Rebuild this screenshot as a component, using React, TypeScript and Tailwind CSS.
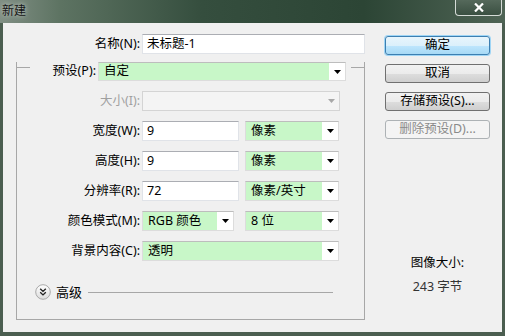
import React from 'react';

const Arrow = ({ disabled = false }: { disabled?: boolean }) => (
  <svg width="7" height="4" viewBox="0 0 7 4">
    <path d="M0 0h7L3.5 4z" fill={disabled ? '#a8a8a8' : '#000'} />
  </svg>
);

const TextInput = ({ value, w }: { value: string; w: string }) => (
  <div className={`${w} h-full bg-white border border-[#e0e3e8] border-t-[#abadb3] pl-[4px] flex items-center`}>
    {value}
  </div>
);

const GreenSelect = ({ value, w }: { value: string; w: string }) => (
  <div className={`${w} h-full flex border border-[#dcdcdc] border-t-[#bdbdbd] bg-white`}>
    <div className="flex-1 bg-[#c8f7c8] pl-[5px] flex items-center">{value}</div>
    <div className="w-[16px] flex items-center justify-center">
      <Arrow />
    </div>
  </div>
);

const Label = ({ text, disabled = false }: { text: string; disabled?: boolean }) => (
  <div className={`w-[125px] text-right pr-[2px] ${disabled ? 'text-[#a0a0a0]' : 'text-black'}`}>{text}</div>
);

const Btn = ({ text, kind }: { text: string; kind?: 'focus' | 'disabled' }) => {
  const cls =
    kind === 'focus'
      ? 'border-[#3c7fb1] bg-[linear-gradient(#e8f5fc_0%,#dbf0fb_50%,#bee6fd_51%,#a7d9f5_100%)] shadow-[0_0_0_1px_#9fd5f5] text-black'
      : kind === 'disabled'
      ? 'border-[#adb2b5] bg-[#f4f4f4] text-[#8a8a8a]'
      : 'border-[#707070] bg-[linear-gradient(#f2f2f2_0%,#ebebeb_50%,#dddddd_51%,#cfcfcf_100%)] text-black';
  return (
    <div className={`h-[19px] rounded-[3px] border flex items-center justify-center ${cls}`}>{text}</div>
  );
};

export default function App() {
  return (
    <div className="w-[505px] h-[336px] overflow-hidden flex flex-col bg-[#4b5e50] font-['Noto_Sans','Noto_Sans_CJK_SC',sans-serif] text-[12.5px] leading-none">
      {/* 标题栏 */}
      <div className="h-[23px] flex bg-[linear-gradient(90deg,#808f84_0%,#5d7362_12%,#354e3e_40%,#2c4535_72%,#4f6455_100%)]">
        <div className="pl-[2px] pt-[5px] text-[12px] text-[#151515] [text-shadow:0_0_5px_rgba(255,255,255,0.7)]">新建</div>
        <div className="ml-auto mr-[3px] w-[47px] h-[16px] rounded-b-[4px] border border-t-0 border-[#d5dbd7] bg-[linear-gradient(#55695b,#3a4f41)] flex items-center justify-center">
          <svg width="10" height="9" viewBox="0 0 10 9">
            <path d="M1 0.5l8 8M9 0.5l-8 8" stroke="#fff" strokeWidth="2.2" />
          </svg>
        </div>
      </div>

      {/* 客户区 */}
      <div className="flex-1 mx-[3px] mb-[4px] bg-[#f0f0f0] flex">
        <div className="w-[364px] pt-[11px]">
          <div className="flex h-[20px] items-stretch">
            <div className="w-[139px] text-right pr-[2px] flex items-center justify-end">名称(N):</div>
            <TextInput value="未标题-1" w="w-[223px]" />
          </div>

          {/* 分组框 */}
          <div className="mt-[13px] ml-[13px] w-[349px] border-l border-r border-b border-[#a7a7a7] pb-[19px]">
            <div className="-mt-[5px] flex h-[19px]">
              <div className="w-[13px] h-[6px] border-b border-[#a7a7a7]" />
              <div className="w-[68px] text-right pr-[2px] flex items-center justify-end">预设(P):</div>
              <GreenSelect value="自定" w="w-[248px]" />
              <div className="w-[5px]" />
              <div className="flex-1 h-[6px] border-b border-[#a7a7a7]" />
            </div>

            <div className="mt-[10px] flex h-[20px] items-center">
              <Label text="大小(I):" disabled />
              <div className="w-[198px] h-full flex border border-[#d4d4d4] bg-[#f4f4f4]">
                <div className="flex-1" />
                <div className="w-[16px] flex items-center justify-center">
                  <Arrow disabled />
                </div>
              </div>
            </div>

            <div className="mt-[10px] flex h-[20px] items-center">
              <Label text="宽度(W):" />
              <TextInput value="9" w="w-[97px]" />
              <div className="w-[6px]" />
              <GreenSelect value="像素" w="w-[94px]" />
            </div>

            <div className="mt-[10px] flex h-[20px] items-center">
              <Label text="高度(H):" />
              <TextInput value="9" w="w-[97px]" />
              <div className="w-[6px]" />
              <GreenSelect value="像素" w="w-[94px]" />
            </div>

            <div className="mt-[10px] flex h-[20px] items-center">
              <Label text="分辨率(R):" />
              <TextInput value="72" w="w-[97px]" />
              <div className="w-[6px]" />
              <GreenSelect value="像素/英寸" w="w-[94px]" />
            </div>

            <div className="mt-[10px] flex h-[20px] items-center">
              <Label text="颜色模式(M):" />
              <GreenSelect value="RGB 颜色" w="w-[92px]" />
              <div className="w-[11px]" />
              <GreenSelect value="8 位" w="w-[94px]" />
            </div>

            <div className="mt-[10px] flex h-[20px] items-center">
              <Label text="背景内容(C):" />
              <GreenSelect value="透明" w="w-[197px]" />
            </div>

            {/* 高级 */}
            <div className="mt-[23px] h-[16px] flex items-center">
              <div className="ml-[18px]">
                <svg width="16" height="16" viewBox="0 0 16 16">
                  <defs>
                    <linearGradient id="adv" x1="0" y1="0" x2="0" y2="1">
                      <stop offset="0" stopColor="#ffffff" />
                      <stop offset="1" stopColor="#dcdcdc" />
                    </linearGradient>
                  </defs>
                  <circle cx="8" cy="8" r="7.3" fill="url(#adv)" stroke="#a9a9a9" />
                  <path d="M5.2 4.8l2.8 2.6 2.8-2.6M5.2 8.3l2.8 2.6 2.8-2.6" fill="none" stroke="#222" strokeWidth="1.4" />
                </svg>
              </div>
              <div className="ml-[5px] text-[13px]">高级</div>
              <div className="flex-1 ml-[6px] mr-[31px] h-px bg-[#a7a7a7]" />
            </div>
          </div>
        </div>

        {/* 右侧按钮 */}
        <div className="ml-[18px] w-[105px] pt-[13px]">
          <div className="flex flex-col gap-[9px]">
            <Btn text="确定" kind="focus" />
            <Btn text="取消" />
            <Btn text="存储预设(S)..." />
            <Btn text="删除预设(D)..." kind="disabled" />
          </div>
          <div className="mt-[112px] text-center leading-[24px]">
            <div className="text-black">图像大小:</div>
            <div className="text-[#333]">243 字节</div>
          </div>
        </div>
      </div>
    </div>
  );
}
